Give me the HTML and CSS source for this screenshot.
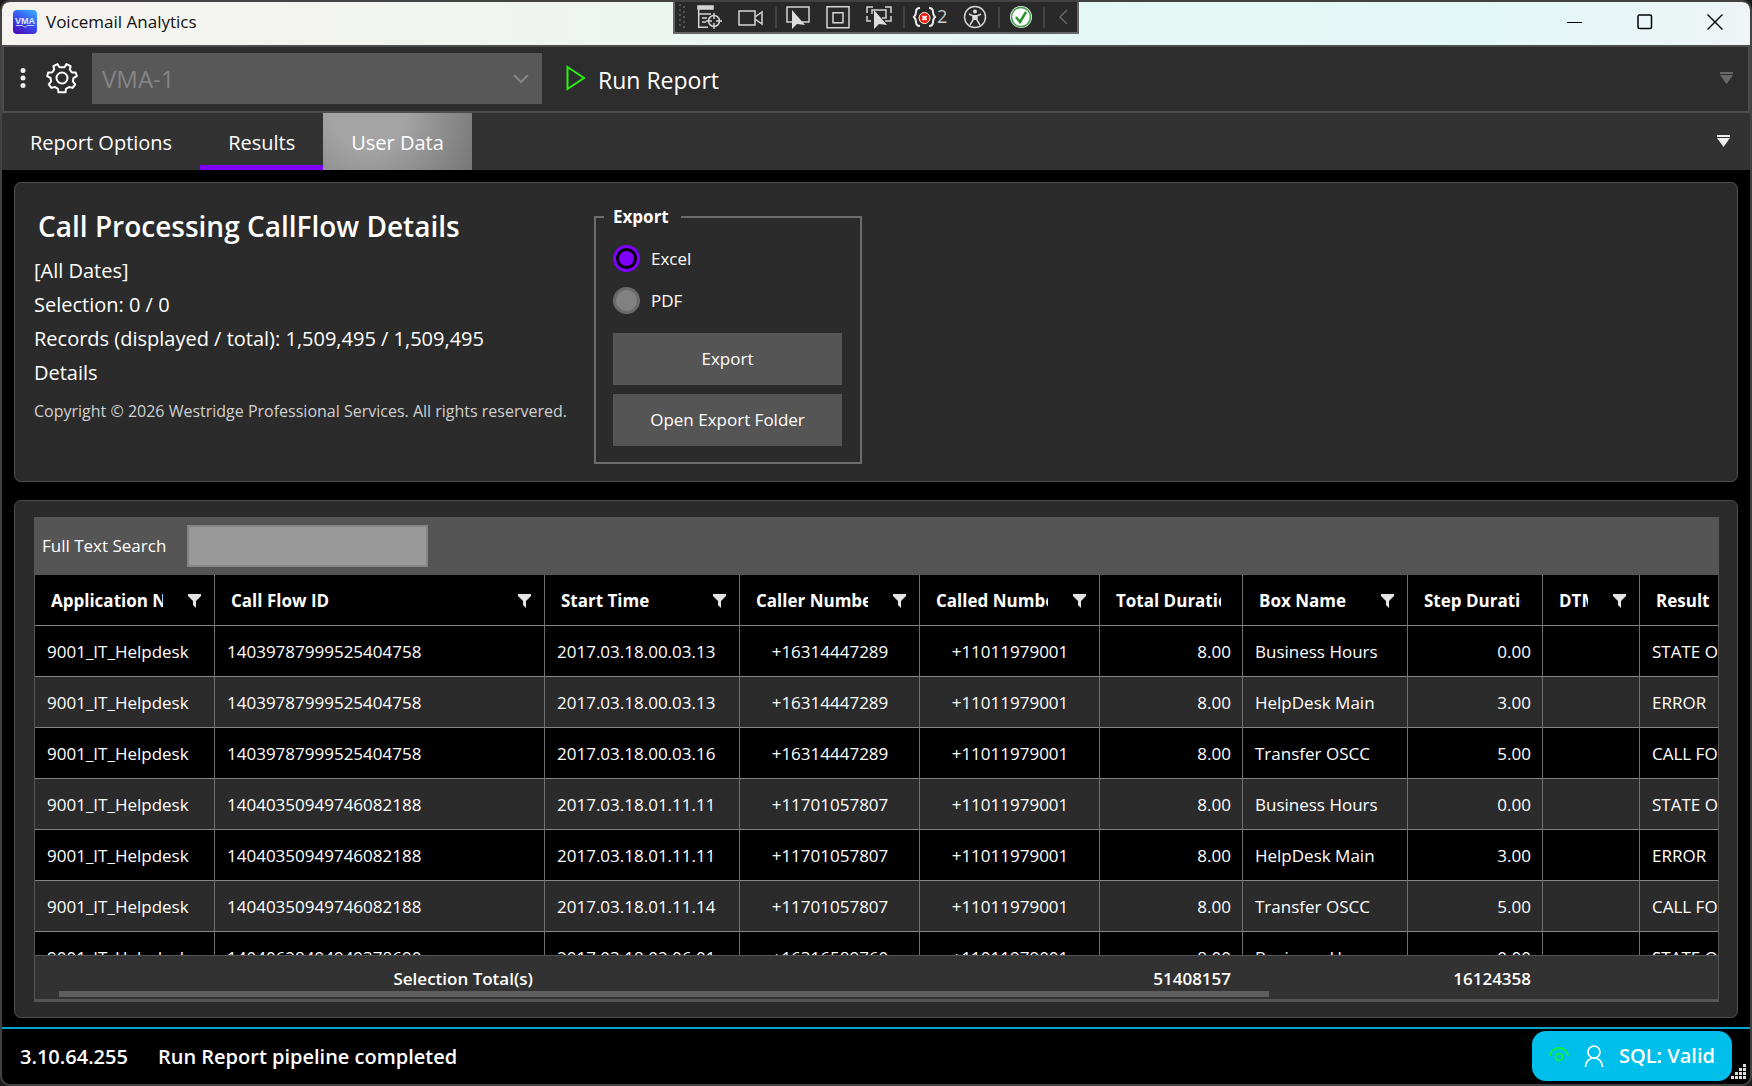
FILE: index.html
```html
<!DOCTYPE html>
<html lang="en">
<head>
<meta charset="utf-8">
<title>Voicemail Analytics</title>
<link rel="stylesheet" href="styles.css">
</head>
<body>
<svg class="defs" aria-hidden="true">
  <symbol id="filter" viewBox="0 0 13 14"><path d="M0 0h13v2L8 7v7l-3-3V7L0 2z" fill="#e4e4e4"/></symbol>
  <symbol id="overflow" viewBox="0 0 13 12"><path d="M0 0h13v2H0zM0 3h13L6.500 12z" fill="currentColor"/></symbol>
</svg>
<div class="app">
  <header class="titlebar">
    <svg class="logo" width="24" height="24" viewBox="0 0 24 24" aria-hidden="true">
      <defs><linearGradient id="lg" x1="0.800" y1="0" x2="0.200" y2="1"><stop offset="0" stop-color="#38a4ff"/><stop offset="0.500" stop-color="#3a4cf0"/><stop offset="1" stop-color="#4a10b8"/></linearGradient></defs>
      <rect width="24" height="24" rx="4" fill="url(#lg)"/>
      <text x="12" y="14" text-anchor="middle" class="logo-text">VMA</text>
      <path d="M3 15.500h7l2 2 2-2h7" fill="none" stroke="#b9c8ff" stroke-width="1"/>
    </svg>
    <span class="window-title">Voicemail Analytics</span>
    <div class="window-buttons">
      <button aria-label="Minimize"><svg width="16" height="16" viewBox="0 0 16 16"><path d="M0 8.500h15" stroke="#000"/></svg></button>
      <button aria-label="Maximize"><svg width="16" height="16" viewBox="0 0 16 16"><rect x="1" y="1" width="13.500" height="13.500" rx="1.500" fill="none" stroke="#000" stroke-width="1.500"/></svg></button>
      <button aria-label="Close"><svg width="16" height="16" viewBox="0 0 16 16"><path d="M.5.5l15 15M15.500.5l-15 15" stroke="#000" stroke-width="1.400"/></svg></button>
    </div>
  </header>

  <div class="debug-bar">
    <svg width="402" height="30" viewBox="0 0 402 30" aria-hidden="true">
      <g fill="#555"><path d="M4 2h2v2H4zM8 4h2v2H8zM4 7h2v2H4zM8 9h2v2H8zM4 12h2v2H4zM8 14h2v2H8zM4 17h2v2H4zM8 19h2v2H8zM4 22h2v2H4zM8 24h2v2H8z"/></g>
      <g stroke="#444" stroke-width="2"><path d="M101 5v21M229 5v21M324 5v21M369 5v21"/></g>
      <g fill="none" stroke="#d4d4d4" stroke-width="1.500">
        <path d="M23.700 4v21.300H33M24 12h12M27 16h5M27 20h4"/><path d="M23 4h15v3H23z" fill="#d4d4d4"/>
        <circle cx="39" cy="19" r="5.500"/><path d="M39 11v6M39 21v6M31 19h6M41 19h6"/>
        <path d="M64 9h16v14H64zM80 15l7-5v12l-7-5"/>
        <path d="M118 20h-6V5h22v15h-7"/>
        <path d="M152 4.700h22v21h-22zM158 10.700h10v10h-10z"/>
        <path d="M192 11V5h6M210 5h6v6M192 14v5h4M216 14v5h-6M197 12V8h14v8h-4"/>
        <circle cx="300" cy="15" r="10.500"/><path d="M294 12l4 2v4l-3 5M306 12l-4 2v4l3 5M298 14h4"/>
      </g>
      <g fill="#ddd"><path d="M117 8v19l5-5 8 1zM199 8v19l5-5 8 1z"/><circle cx="300" cy="9.500" r="2"/><path d="M298 13h4v5h-4z"/></g>
      <path d="M245 6c-3 0-4 1-4 4s-1 4-2 5c1 1 2 2 2 5s1 4 4 4M254 6c3 0 4 1 4 4s1 4 2 5c-1 1-2 2-2 5s-1 4-4 4" fill="none" stroke="#eee" stroke-width="2"/>
      <circle cx="249.500" cy="16" r="5.500" fill="#f01c0c" stroke="#fff" stroke-width="1"/>
      <path d="M247.500 14l4 4M251.500 14l-4 4" stroke="#fff" stroke-width="2"/>
      <text x="262" y="21" class="debug-count">2</text>
      <circle cx="346" cy="15" r="11" fill="#eee"/><circle cx="346" cy="15" r="9.500" fill="#fff" stroke="#38a040" stroke-width="1.500"/>
      <path d="M341 15l4 5 6-10" fill="none" stroke="#2a9434" stroke-width="2.500"/>
      <path d="M392 8l-7 7 7 7" fill="none" stroke="#666" stroke-width="1.500"/>
    </svg>
  </div>

  <div class="toolbar">
    <svg class="dots" width="6" height="20" viewBox="0 0 6 20" aria-hidden="true" fill="#eee"><circle cx="3" cy="2.500" r="2.500"/><circle cx="3" cy="10" r="2.500"/><circle cx="3" cy="17.500" r="2.500"/></svg>
    <button class="icon-button" aria-label="Settings"><svg width="32" height="32" viewBox="-16 -16 32 32" fill="none" stroke="#fff" stroke-width="2" stroke-linejoin="round">
      <circle r="5.500"/>
      <path d="M-4.500 -13.900L-2.500 -10.700H2.500L4.500 -13.900L8.600 -11.800L7.800 -8.300L10 -5.500L13.800 -5.500L14.800 -1.800L11.500 0L10.800 3.400L13.200 6.300L10.600 9.900L7 9L4 10.800L3.500 14.300L-3.500 14.300L-4 10.800L-7 9L-10.600 9.900L-13.200 6.300L-10.800 3.400L-11.500 0L-14.800 -1.800L-13.800 -5.500L-10 -5.500L-7.800 -8.300L-8.600 -11.800Z"/></svg></button>
    <div class="combo">
      <select aria-label="Server" disabled><option>VMA-1</option></select>
      <svg width="16" height="10" viewBox="0 0 16 10" aria-hidden="true"><path d="M1 1l7 7 7-7" fill="none" stroke="#858585" stroke-width="2"/></svg>
    </div>
    <button class="run"><svg width="20" height="26" viewBox="0 0 20 26" aria-hidden="true"><path d="M1.500 2v22L18 13z" fill="none" stroke="#2bf00e" stroke-width="2"/></svg><span>Run Report</span></button>
    <button class="more dim" aria-label="More tools"><svg width="13" height="12"><use href="#overflow"/></svg></button>
  </div>

  <nav class="tabs">
    <button>Report Options</button>
    <button class="selected">Results</button>
    <button class="hovered">User Data</button>
    <button class="more" aria-label="More tabs"><svg width="13" height="12"><use href="#overflow"/></svg></button>
  </nav>

  <main>
    <section class="panel summary">
      <div class="facts">
        <h1>Call Processing CallFlow Details</h1>
        <p>[All Dates]</p>
        <p>Selection: 0 / 0</p>
        <p>Records (displayed / total): 1,509,495 / 1,509,495</p>
        <p>Details</p>
        <p class="copyright">Copyright © 2026 Westridge Professional Services. All rights reservered.</p>
      </div>
      <fieldset class="export">
        <legend>Export</legend>
        <label><input type="radio" name="format" checked>Excel</label>
        <label><input type="radio" name="format">PDF</label>
        <button>Export</button>
        <button>Open Export Folder</button>
      </fieldset>
    </section>

    <section class="panel results">
      <div class="search"><label for="search">Full Text Search</label><input id="search" type="text"></div>
      <div class="grid">
        <div class="rows">
          <table>
            <colgroup><col class="w180"><col class="w330"><col class="w195"><col class="w180"><col class="w180"><col class="w143"><col class="w165"><col class="w135"><col class="w97"><col class="w180"></colgroup>
            <thead><tr>
              <th><div><span>Application Name</span><svg><use href="#filter"/></svg></div></th>
              <th><div><span>Call Flow ID</span><svg><use href="#filter"/></svg></div></th>
              <th><div><span>Start Time</span><svg><use href="#filter"/></svg></div></th>
              <th><div><span>Caller Number</span><svg><use href="#filter"/></svg></div></th>
              <th><div><span>Called Number</span><svg><use href="#filter"/></svg></div></th>
              <th class="plain"><div><span>Total Duration</span></div></th>
              <th><div><span>Box Name</span><svg><use href="#filter"/></svg></div></th>
              <th class="plain"><div><span>Step Duration</span></div></th>
              <th><div><span>DTMF</span><svg><use href="#filter"/></svg></div></th>
              <th><div><span>Result</span><svg><use href="#filter"/></svg></div></th>
            </tr></thead>
            <tbody>
              <tr><td>9001_IT_Helpdesk</td><td>14039787999525404758</td><td>2017.03.18.00.03.13</td><td class="mid">+16314447289</td><td class="mid">+11011979001</td><td class="num">8.00</td><td>Business Hours</td><td class="num">0.00</td><td></td><td>STATE OPEN</td></tr>
              <tr><td>9001_IT_Helpdesk</td><td>14039787999525404758</td><td>2017.03.18.00.03.13</td><td class="mid">+16314447289</td><td class="mid">+11011979001</td><td class="num">8.00</td><td>HelpDesk Main</td><td class="num">3.00</td><td></td><td>ERROR</td></tr>
              <tr><td>9001_IT_Helpdesk</td><td>14039787999525404758</td><td>2017.03.18.00.03.16</td><td class="mid">+16314447289</td><td class="mid">+11011979001</td><td class="num">8.00</td><td>Transfer OSCC</td><td class="num">5.00</td><td></td><td>CALL FORWARD</td></tr>
              <tr><td>9001_IT_Helpdesk</td><td>14040350949746082188</td><td>2017.03.18.01.11.11</td><td class="mid">+11701057807</td><td class="mid">+11011979001</td><td class="num">8.00</td><td>Business Hours</td><td class="num">0.00</td><td></td><td>STATE OPEN</td></tr>
              <tr><td>9001_IT_Helpdesk</td><td>14040350949746082188</td><td>2017.03.18.01.11.11</td><td class="mid">+11701057807</td><td class="mid">+11011979001</td><td class="num">8.00</td><td>HelpDesk Main</td><td class="num">3.00</td><td></td><td>ERROR</td></tr>
              <tr><td>9001_IT_Helpdesk</td><td>14040350949746082188</td><td>2017.03.18.01.11.14</td><td class="mid">+11701057807</td><td class="mid">+11011979001</td><td class="num">8.00</td><td>Transfer OSCC</td><td class="num">5.00</td><td></td><td>CALL FORWARD</td></tr>
              <tr><td>9001_IT_Helpdesk</td><td>14040628494949378690</td><td>2017.03.18.02.06.01</td><td class="mid">+16316589760</td><td class="mid">+11011979001</td><td class="num">8.00</td><td>Business Hours</td><td class="num">0.00</td><td></td><td>STATE OPEN</td></tr>
            </tbody>
          </table>
        </div>
        <div class="totals">
          <table>
            <colgroup><col class="w180"><col class="w330"><col class="w195"><col class="w180"><col class="w180"><col class="w143"><col class="w165"><col class="w135"><col class="w97"><col class="w180"></colgroup>
            <tbody><tr><td colspan="2" class="num">Selection Total(s)</td><td colspan="4" class="num">51408157</td><td colspan="2" class="num">16124358</td><td colspan="2"></td></tr></tbody>
          </table>
          <div class="scroll"><div class="thumb"></div></div>
        </div>
      </div>
    </section>
  </main>

  <footer class="status">
    <span>3.10.64.255</span>
    <span>Run Report pipeline completed</span>
    <div class="sql">
      <svg width="20" height="18" viewBox="0 0 20 18" aria-hidden="true" fill="none" stroke="#0cf53a" stroke-width="1.800"><path d="M1 9a9 8 0 0 1 18 0"/><circle cx="10" cy="10" r="3.500"/></svg>
      <svg width="20" height="22" viewBox="0 0 20 22" aria-hidden="true" fill="none" stroke="#fff" stroke-width="1.700"><circle cx="10" cy="7" r="6"/><path d="M1.500 22c0-5 3.500-9 8.500-9s8.500 4 8.500 9"/></svg>
      <span>SQL: Valid</span>
    </div>
    <svg class="grip" width="16" height="16" viewBox="0 0 16 16" aria-hidden="true" fill="#ddd"><path d="M12 0h3v3h-3zM8 4h3v3H8zM12 4h3v3h-3zM4 8h3v3H4zM8 8h3v3H8zM12 8h3v3h-3zM0 12h3v3H0zM4 12h3v3H4zM8 12h3v3H8zM12 12h3v3h-3z"/></svg>
  </footer>
</div>
</body>
</html>
```
FILE: styles.css
```css
* { box-sizing: border-box; }
body { margin: 0; background: #1c1c1c; color: #fff; font: 17px/24px "Open Sans", "Noto Sans", sans-serif; }
button, input, select { font: inherit; color: inherit; }
button { border: 0; background: none; padding: 0; }
.defs { position: absolute; width: 0; height: 0; }

.app { position: relative; display: flex; flex-direction: column; height: 100vh; border: 2px solid #424242; border-radius: 10px; overflow: hidden; background: #000; }

.titlebar { display: flex; align-items: center; flex: none; height: 43px; padding: 0 0 3px 11px; background: linear-gradient(90deg, #f5f3ef 0%, #f1f4f0 28%, #e6f7f3 55%, #e2f8f7 85%, #eff4f6 100%); color: #111; }
.window-title { margin-left: 9px; }
.logo-text { font: bold 9px "Liberation Sans", sans-serif; fill: #dfe6ff; }
.window-buttons { display: flex; margin-left: auto; }
.window-buttons button { display: grid; place-items: center; width: 70px; height: 40px; color: #000; }

.debug-bar { position: absolute; top: -2px; left: 50%; margin-left: -203px; width: 406px; height: 34px; border: 2px solid #666; background: #292929; }
.debug-bar svg { display: block; }
.debug-count { font: 18px "Open Sans", sans-serif; fill: #ccc; }

.toolbar { display: flex; align-items: center; flex: none; height: 68px; border: 2px solid #4c4c4c; background: #2d2d2d; padding: 0 15px 2px 16px; }
.icon-button { margin: 0 14px 0 20px; height: 32px; }
.combo { position: relative; width: 450px; height: 51px; }
.combo select { width: 100%; height: 100%; appearance: none; border: 0; padding: 2px 10px 0; background: #585858; color: #858585; opacity: 1; font-size: 24px; }
.combo svg { position: absolute; right: 13px; top: 21px; }
.run { display: flex; align-items: center; gap: 12px; margin-left: 24px; font-size: 23px; line-height: 32px; }
.run span { padding-top: 3px; }
.more { margin-left: auto; color: #f0f0f0; }
.more svg { display: block; }
.more.dim { color: #686868; }

.tabs { display: flex; flex: none; height: 57px; background: #323232; font-size: 20px; }
.tabs button { padding: 2px 28px 0; border-bottom: 5px solid transparent; border-top: 5px solid transparent; }
.tabs .selected { border-bottom-color: #8000ff; }
.tabs .hovered { border: 0; background: radial-gradient(circle at 30% 0, #a4a4a4 0 30%, #707070 110%); }
.tabs .more { padding: 0 20px 2px; }

main { display: flex; flex-direction: column; flex: 1; min-height: 0; gap: 18px; padding: 12px 12px 9px; }
.panel { border: 1px solid #4d4d4d; border-radius: 7px; background: #2b2b2b; }
.summary { display: flex; flex: none; height: 300px; padding: 24px 19px 16px; gap: 20px; }
.facts { flex: none; width: 540px; font-size: 20px; line-height: 34px; white-space: nowrap; }
h1 { margin: 0 0 9px 4px; font-size: 28px; font-weight: 600; line-height: 38px; }
p { margin: 0; }
.copyright { margin-top: 4px; color: #d0d0d0; font-size: 16px; }

.export { align-self: flex-start; width: 268px; margin: 0; padding: 18px 18px 16px 17px; border: 2px solid #6b6b6b; }
.export legend { margin-left: -9px; padding: 0 12px 0 9px; font-weight: 700; line-height: 20px; }
.export label { display: flex; align-items: center; height: 27px; margin-bottom: 15px; }
.export input { appearance: none; width: 27px; height: 27px; margin: 0 11px 0 0; border: 3px solid #6b6b6b; border-radius: 50%; background: #818181; }
.export input:checked { border-color: #8000ff; background: radial-gradient(circle, #8000ff 0 7px, #000 8px); }
.export button { display: block; width: 100%; height: 52px; margin-top: 9px; background: #555; }
.export label + button { margin-top: 19px; }

.results { display: flex; flex-direction: column; flex: 1; min-height: 0; padding: 16px 18px 15px 19px; }
.search { display: flex; align-items: center; flex: none; height: 58px; padding-left: 8px; background: #555; }
.search label { width: 145px; }
.search input { width: 241px; height: 42px; padding: 0 8px; border: 2px solid #858585; background: #999; }
.grid { display: flex; flex-direction: column; flex: 1; min-height: 0; border: 1px solid #555; border-top: 0; }
.rows { flex: 1; min-height: 0; overflow: hidden; background: #000; }
table { width: 1785px; border-collapse: separate; border-spacing: 0; table-layout: fixed; }
.w97 { width: 97px; } .w135 { width: 135px; } .w143 { width: 143px; } .w165 { width: 165px; } .w180 { width: 180px; } .w195 { width: 195px; } .w330 { width: 330px; }
th, td { height: 51px; padding: 2px 11px 0 12px; border-right: 1px solid #6e6e6e; border-bottom: 1px solid #858585; white-space: nowrap; text-align: left; }
th { padding: 2px 13px 0 16px; font-weight: 700; }
th.plain { padding-right: 21px; }
th div { display: flex; align-items: center; gap: 25px; }
th span { flex: 1; min-width: 0; overflow: hidden; }
th svg { flex: none; width: 13px; height: 14px; }
.rows tbody tr:nth-child(even) { background: #2b2b2b; }
td.mid { text-align: center; }
td.num { text-align: right; }
.totals { position: relative; flex: none; height: 46px; overflow: hidden; border: 1px solid #555; border-width: 1px 0 2px; background: #323232; font-weight: 600; }
.totals td { border: 0; height: 44px; padding-right: 12px; }
.scroll { position: absolute; left: 24px; right: 24px; bottom: 2px; height: 6px; }
.thumb { width: 74%; height: 6px; background: #5e5e5e; }

.status { position: relative; display: flex; align-items: center; flex: none; gap: 30px; height: 57px; padding: 0 18px; border-top: 2px solid #0aa3ca; font-size: 20px; font-weight: 600; }
.sql { display: flex; align-items: center; justify-content: center; gap: 15px; width: 200px; height: 50px; margin: 0 0 2px auto; border-radius: 14px; background: #00bfeb; }
.grip { position: absolute; right: 3px; bottom: 4px; }
```
